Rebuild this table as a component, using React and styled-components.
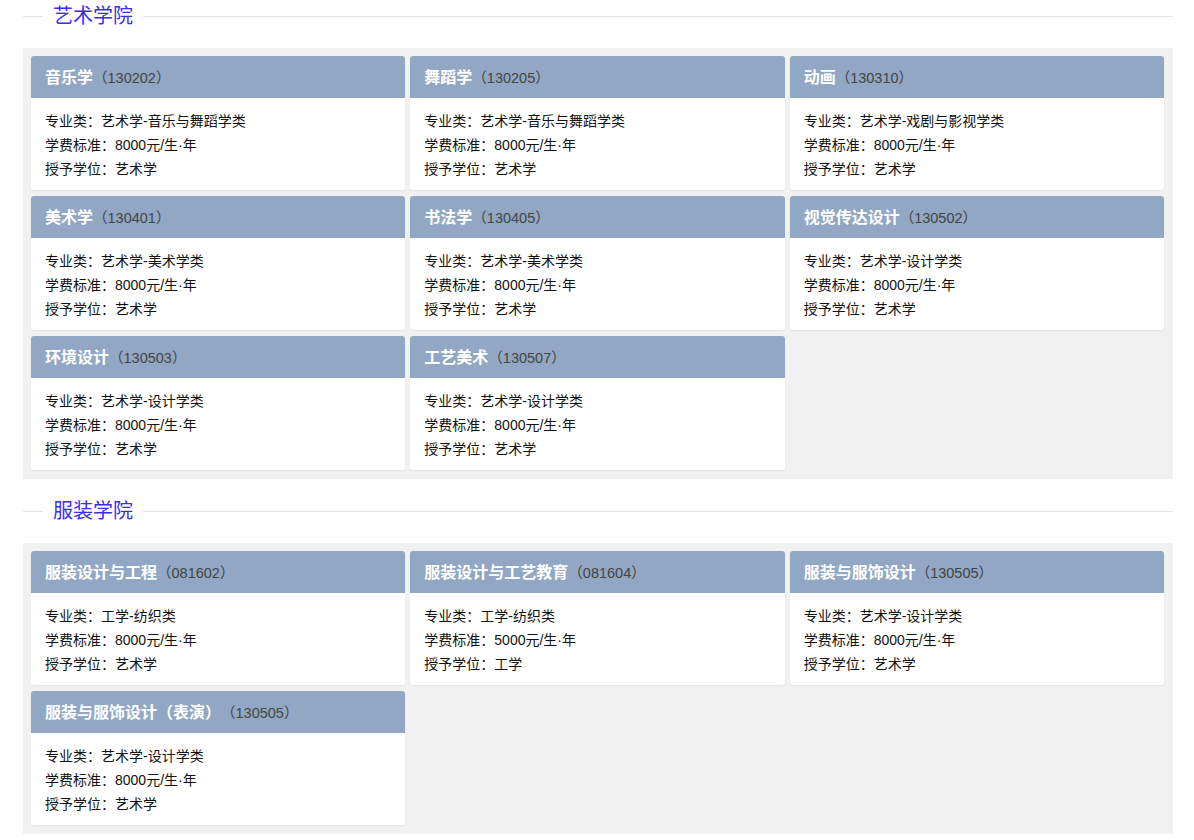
import React from 'react'
import styled, { createGlobalStyle } from 'styled-components'

const GlobalStyle = createGlobalStyle`
  body {
    margin: 0;
    background: #fff;
    font-family: "Liberation Sans", "Noto Sans CJK SC", sans-serif;
    color: #111;
  }
`;

const Page = styled.div`
  padding: 0 21px 0 23px;
`;

const SectionTitle = styled.div`
  position: relative;
  height: 32px;
  margin-bottom: 16px;
  display: flex;
  align-items: center;
  &::before {
    content: '';
    position: absolute;
    left: 0;
    right: 0;
    top: 16px;
    border-top: 1px solid #e4e4e4;
  }
  span {
    position: relative;
    margin-left: 20px;
    padding: 0 10px;
    background: #fff;
    color: #3a2cf2;
    font-size: 20px;
    line-height: 32px;
  }
`;

const Panel = styled.div`
  background: #f1f1f1;
  padding: 8px 9px 9px 8px;
  margin-bottom: 16px;
  display: grid;
  grid-template-columns: repeat(3, 1fr);
  column-gap: 5px;
  row-gap: 6px;
`;

const Card = styled.div`
  background: #fff;
  border-radius: 3px;
  overflow: hidden;
  box-shadow: 0 1px 2px rgba(0, 0, 0, 0.06);
`;

const CardHead = styled.div`
  height: 42px;
  background: #91a7c3;
  display: flex;
  align-items: center;
  padding: 0 0 2px 14px;
  box-sizing: border-box;
  white-space: nowrap;
  b {
    color: #fff;
    font-size: 16px;
    font-weight: bold;
  }
  small {
    color: #444;
    font-size: 14.5px;
  }
`;

const CardBody = styled.div`
  padding: 11px 14px 9px;
  font-size: 14px;
  line-height: 24px;
`;

const sections = [
  {
    title: '艺术学院',
    items: [
      ['音乐学', '130202', '艺术学-音乐与舞蹈学类', '8000', '艺术学'],
      ['舞蹈学', '130205', '艺术学-音乐与舞蹈学类', '8000', '艺术学'],
      ['动画', '130310', '艺术学-戏剧与影视学类', '8000', '艺术学'],
      ['美术学', '130401', '艺术学-美术学类', '8000', '艺术学'],
      ['书法学', '130405', '艺术学-美术学类', '8000', '艺术学'],
      ['视觉传达设计', '130502', '艺术学-设计学类', '8000', '艺术学'],
      ['环境设计', '130503', '艺术学-设计学类', '8000', '艺术学'],
      ['工艺美术', '130507', '艺术学-设计学类', '8000', '艺术学'],
    ],
  },
  {
    title: '服装学院',
    items: [
      ['服装设计与工程', '081602', '工学-纺织类', '8000', '艺术学'],
      ['服装设计与工艺教育', '081604', '工学-纺织类', '5000', '工学'],
      ['服装与服饰设计', '130505', '艺术学-设计学类', '8000', '艺术学'],
      ['服装与服饰设计（表演）', '130505', '艺术学-设计学类', '8000', '艺术学'],
    ],
  },
];

function MajorCard({ item }) {
  const [name, code, cls, fee, degree] = item;
  return (
    <Card>
      <CardHead>
        <b>{name}</b>
        <small>（{code}）</small>
      </CardHead>
      <CardBody>
        <div>专业类：{cls}</div>
        <div>学费标准：{fee}元/生·年</div>
        <div>授予学位：{degree}</div>
      </CardBody>
    </Card>
  );
}

export default function App() {
  return (
    <Page>
      <GlobalStyle />
      {sections.map(s => (
        <section key={s.title}>
          <SectionTitle><span>{s.title}</span></SectionTitle>
          <Panel>
            {s.items.map((it, i) => <MajorCard key={i} item={it} />)}
          </Panel>
        </section>
      ))}
    </Page>
  );
}
